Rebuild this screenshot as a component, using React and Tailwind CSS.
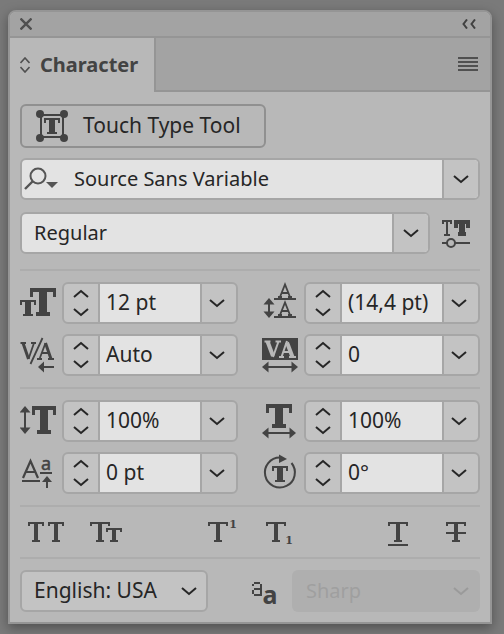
import React from "react";

const INK = "#434343";

function Chevron({ up = false, className = "" }) {
  return (
    <svg width="16" height="9" viewBox="0 0 16 9" aria-hidden="true" className={className}>
      <path
        d={up ? "M1 8 L8 2 L15 8" : "M1 1 L8 7 L15 1"}
        fill="none"
        stroke="currentColor"
        strokeWidth="2"
      />
    </svg>
  );
}

// Slab-serif type symbol: top bar, two hanging serifs, stem and foot.
function Slab({ x, y, w, h, bar, drop, serif, stem, foot }) {
  const mid = x + w / 2;
  return (
    <g fill={INK} shapeRendering="crispEdges">
      <rect x={x} y={y} width={w} height={bar} />
      <rect x={x} y={y} width={serif} height={drop} />
      <rect x={x + w - serif} y={y} width={serif} height={drop} />
      <rect x={mid - stem / 2} y={y} width={stem} height={h} />
      <rect x={mid - foot / 2} y={y + h - bar} width={foot} height={bar} />
    </g>
  );
}

function LargeSlab({ x, y, w = 26, h = 28 }) {
  return <Slab x={x} y={y} w={w} h={h} bar={4} drop={9} serif={3} stem={8} foot={14} />;
}

function SmallSlab({ x, y }) {
  return <Slab x={x} y={y} w={16} h={16} bar={2} drop={5} serif={2} stem={6} foot={10} />;
}

function LightSlab({ x, y = 15, w = 20, h = 20 }) {
  return <Slab x={x} y={y} w={w} h={h} bar={2} drop={4} serif={2} stem={4} foot={8} />;
}

function Icon({ w = 36, h = 42, children }) {
  return (
    <svg width={w} height={h} viewBox={`0 0 ${w} ${h}`} fill={INK} aria-hidden="true" className="shrink-0">
      {children}
    </svg>
  );
}

function ArrowV({ x, top, bottom }) {
  return (
    <>
      <path d={`M${x - 5.5} ${top + 6.5} L${x} ${top} L${x + 5.5} ${top + 6.5} Z`} />
      <path d={`M${x - 5.5} ${bottom - 6.5} L${x} ${bottom} L${x + 5.5} ${bottom - 6.5} Z`} />
      <rect x={x - 1} y={top + 3} width="2" height={bottom - top - 6} />
    </>
  );
}

function ArrowH({ y, left, right }) {
  return (
    <>
      <path d={`M${left + 6.5} ${y - 5.5} L${left} ${y} L${left + 6.5} ${y + 5.5} Z`} />
      <path d={`M${right - 6.5} ${y - 5.5} L${right} ${y} L${right - 6.5} ${y + 5.5} Z`} />
      <rect x={left + 3} y={y - 1} width={right - left - 6} height="2" />
    </>
  );
}

const icons = {
  size: (
    <Icon>
      <LargeSlab x={10} y={6} />
      <SmallSlab x={0} y={18} />
    </Icon>
  ),
  leading: (
    <Icon>
      <g fill="none" stroke={INK} strokeWidth="1.8">
        <path d="M18 15 L23 2.5 L28 15 M20 11 H26 M16 15 H20 M26 15 H30" />
        <path d="M18 33 L23 20.5 L28 33 M20 29 H26 M16 33 H20 M26 33 H30" />
      </g>
      <rect x="12" y="16" width="22" height="2" />
      <rect x="12" y="34" width="22" height="2" />
      <ArrowV x={7} top={16} bottom={36} />
    </Icon>
  ),
  kerning: (
    <Icon>
      <g fill="none" stroke={INK}>
        <path d="M3 9 L8.5 25" strokeWidth="3" />
        <path d="M8.5 25 L14 9 M0.5 9 H6 M11 9 H16 M22.5 4 L10.5 30" strokeWidth="1.8" />
        <path d="M25.5 9 L31 25" strokeWidth="3" />
        <path d="M19.5 25 L25.5 9 M21.5 19 H29 M17 25 H22 M28 25 H34" strokeWidth="1.8" />
      </g>
      <path d="M18 33 L24 27.5 V38.5 Z" />
      <rect x="23" y="32" width="11" height="2" />
    </Icon>
  ),
  tracking: (
    <Icon>
      <rect x="0" y="4" width="36" height="22" />
      <g fill="none" stroke="#b8b8b8">
        <path d="M5.5 7.5 L11 22" strokeWidth="4" />
        <path d="M11 23 L16.5 7.5 M2.5 7.5 H8.5 M13.5 7.5 H19" strokeWidth="2" />
        <path d="M25 8.5 L30.5 23" strokeWidth="4" />
        <path d="M19.5 23 L25 7 M21 18 H28 M17 23 H22 M27 23 H34" strokeWidth="2" />
      </g>
      <ArrowH y={33} left={0} right={36} />
    </Icon>
  ),
  vertical: (
    <Icon>
      <ArrowV x={5} top={6} bottom={34} />
      <LargeSlab x={12} y={6} w={24} />
    </Icon>
  ),
  horizontal: (
    <Icon>
      <LargeSlab x={4} y={4} h={24} />
      <ArrowH y={33} left={0} right={34} />
    </Icon>
  ),
  baseline: (
    <Icon>
      <path d="M3 26 L10.5 9 L18 26 M6 20 H15" fill="none" stroke={INK} strokeWidth="2.2" />
      <rect x="2" y="28" width="18" height="2" />
      <text x="26" y="18" fontSize="18" textAnchor="middle" stroke={INK} strokeWidth="0.5" className="font-['Noto_Sans',sans-serif]">a</text>
      <rect x="20" y="20" width="12" height="2" />
      <path d="M22 30 L27 24 L32 30 Z" />
      <rect x="26" y="28" width="2" height="8" />
    </Icon>
  ),
  rotation: (
    <Icon>
      <path d="M29.5 11 A15 15 0 1 1 18 5.5" fill="none" stroke={INK} strokeWidth="2" />
      <path d="M17 2.5 L25 7 L17 11 Z" />
      <SmallSlab x={10} y={14} />
    </Icon>
  ),
};

function NumberField({ icon, label, value, id }) {
  return (
    <div className="flex min-w-0 items-center">
      <label htmlFor={id} aria-label={label} title={label} className="w-[42px] shrink-0">
        {icons[icon]}
      </label>
      <div className="flex h-[42px] min-w-0 flex-1 rounded-md border-2 border-[#a6a6a6] bg-[#c3c3c3] text-[#262626]">
        <div className="flex w-[34px] shrink-0 flex-col">
          <button type="button" aria-label={`Increase ${label}`} className="flex flex-1 items-center justify-center">
            <Chevron up />
          </button>
          <button type="button" aria-label={`Decrease ${label}`} className="flex flex-1 items-center justify-center">
            <Chevron />
          </button>
        </div>
        <input
          id={id}
          type="text"
          defaultValue={value}
          className="w-0 min-w-0 flex-1 border-x-2 border-[#a6a6a6] bg-[#e3e3e3] pl-1.5 outline-none"
        />
        <button type="button" aria-label={`${label} presets`} className="flex w-[34px] shrink-0 items-center justify-center pr-1">
          <Chevron />
        </button>
      </div>
    </div>
  );
}

function Dropdown({ label, value, search = false }) {
  return (
    <div className="relative min-w-0 flex-1 text-xl text-[#262626]">
      <select
        aria-label={label}
        className={`h-[42px] w-full appearance-none rounded-md border-2 border-[#a6a6a6] bg-[#e3e3e3] pr-10 outline-none ${search ? "pl-[52px]" : "pl-3"}`}
      >
        <option>{value}</option>
      </select>
      {search && (
        <svg width="36" height="26" viewBox="0 0 36 26" fill="none" stroke="#555" aria-hidden="true" className="pointer-events-none absolute top-2 left-1">
          <circle cx="14" cy="10" r="7.5" strokeWidth="2" />
          <path d="M8.5 15.5 L1 23" strokeWidth="2.4" />
          <path d="M22 16 H34 L28 22 Z" fill="#555" stroke="none" />
        </svg>
      )}
      <span className="pointer-events-none absolute inset-y-0.5 right-0.5 flex w-9 items-center justify-center rounded-r border-l-2 border-[#a6a6a6] bg-[#c3c3c3]">
        <Chevron />
      </span>
    </div>
  );
}

function StyleButton({ label, children }) {
  return (
    <button type="button" aria-label={label} title={label}>
      <Icon w={40} h={50}>{children}</Icon>
    </button>
  );
}

function SmallOne({ x, y }) {
  return (
    <text x={x} y={y} textAnchor="middle" fontSize="11" fontWeight="700" className="font-['DejaVu_Serif',serif]">
      1
    </text>
  );
}

const divider = "h-0.5 border-0 bg-[#adadad]";

export default function App() {
  return (
    <main className="min-h-screen bg-[#7a7a7a] pt-2.5 pr-3 pb-2.5 pl-2 font-['Noto_Sans',sans-serif] text-[21px] text-[#262626]">
      <section aria-label="Character" className="min-w-[460px] overflow-hidden rounded-t-lg border-2 border-[#959595] bg-[#b8b8b8] shadow-[0_4px_12px_rgba(0,0,0,0.35)]">
        <header className="flex h-[26px] items-center justify-between border-b-2 border-[#959595] bg-[#a3a3a3] pr-3.5 pl-2.5">
          <button type="button" aria-label="Close">
            <svg width="12" height="12" viewBox="0 0 12 12" stroke="#505050" strokeWidth="2.4" aria-hidden="true">
              <path d="M0.5 0.5 L11.5 11.5 M11.5 0.5 L0.5 11.5" />
            </svg>
          </button>
          <button type="button" aria-label="Collapse panel">
            <svg width="14" height="10" viewBox="0 0 14 10" fill="none" stroke="#404040" strokeWidth="2" aria-hidden="true">
              <path d="M5 0.5 L1.5 5 L5 9.5 M13 0.5 L9.5 5 L13 9.5" />
            </svg>
          </button>
        </header>
        <div className="flex h-[54px]">
          <h1 className="flex w-[146px] shrink-0 items-center gap-2.5 border-r-2 border-[#959595] pl-2.5 text-xl font-bold text-[#434343]">
            <svg width="10" height="16" viewBox="0 0 10 16" fill="none" stroke="#505050" strokeWidth="1.6" aria-hidden="true">
              <path d="M0.5 6 L5 1 L9.5 6 M0.5 10 L5 15 L9.5 10" />
            </svg>
            Character
          </h1>
          <div className="flex flex-1 items-center justify-end border-b-2 border-[#959595] bg-[#a3a3a3] pr-3">
            <button type="button" aria-label="Panel menu">
              <svg width="20" height="14" viewBox="0 0 20 14" fill="#505050" aria-hidden="true">
                <path d="M0 0h20v2H0z M0 4h20v2H0z M0 8h20v2H0z M0 12h20v2H0z" />
              </svg>
            </button>
          </div>
        </div>

        <div className="px-2.5 pt-3 pb-2.5">
          <button type="button" className="flex h-11 w-[246px] items-center gap-[15px] rounded-md border-2 border-[#909090] pl-3.5">
            <Icon w={32} h={32}>
              <rect x="5" y="5" width="22" height="22" fill="none" stroke={INK} strokeWidth="2" />
              <circle cx="4" cy="4" r="4" />
              <circle cx="28" cy="4" r="4" />
              <circle cx="4" cy="28" r="4" />
              <circle cx="28" cy="28" r="4" />
              <SmallSlab x={8} y={8} />
            </Icon>
            Touch Type Tool
          </button>

          <div className="mt-2.5 flex">
            <Dropdown label="Font family" value="Source Sans Variable" search />
          </div>
          <div className="mt-3 flex items-center gap-3">
            <Dropdown label="Font style" value="Regular" />
            <button type="button" aria-label="Variable font options" className="w-[38px] shrink-0">
              <Icon w={28} h={30}>
                <Slab x={0} y={2} w={10} h={16} bar={2} drop={4} serif={2} stem={2} foot={6} />
                <Slab x={12} y={2} w={16} h={16} bar={4} drop={8} serif={4} stem={6} foot={8} />
                <path d="M0 24h28v2H0z" />
                <circle cx="9" cy="25" r="4" fill="#b8b8b8" stroke={INK} strokeWidth="2" />
              </Icon>
            </button>
          </div>

          <hr className={`mt-[15px] mb-[11px] ${divider}`} />
          <div className="grid grid-cols-2 gap-x-6 gap-y-2.5">
            <NumberField id="size" icon="size" label="Font size" value="12 pt" />
            <NumberField id="leading" icon="leading" label="Leading" value="(14,4 pt)" />
            <NumberField id="kerning" icon="kerning" label="Kerning" value="Auto" />
            <NumberField id="tracking" icon="tracking" label="Tracking" value="0" />
          </div>
          <hr className={`my-[11px] ${divider}`} />
          <div className="grid grid-cols-2 gap-x-6 gap-y-2.5">
            <NumberField id="vertical" icon="vertical" label="Vertical scale" value="100%" />
            <NumberField id="horizontal" icon="horizontal" label="Horizontal scale" value="100%" />
            <NumberField id="baseline" icon="baseline" label="Baseline shift" value="0 pt" />
            <NumberField id="rotation" icon="rotation" label="Character rotation" value="0°" />
          </div>
          <hr className={`mt-[11px] ${divider}`} />
          <div className="flex h-[50px] justify-between px-[5px]">
            <div className="flex gap-[18px]">
              <StyleButton label="All caps">
                <LightSlab x={3} w={16} />
                <LightSlab x={23} w={16} />
              </StyleButton>
              <StyleButton label="Small caps">
                <LightSlab x={7} w={20} />
                <LightSlab x={23} y={21} w={16} h={14} />
              </StyleButton>
            </div>
            <div className="flex gap-[18px]">
              <StyleButton label="Superscript">
                <LightSlab x={7} />
                <SmallOne x={32} y={21} />
              </StyleButton>
              <StyleButton label="Subscript">
                <LightSlab x={7} />
                <SmallOne x={30} y={37} />
              </StyleButton>
            </div>
            <div className="flex gap-[18px]">
              <StyleButton label="Underline">
                <LightSlab x={11} />
                <rect x="11" y="37" width="20" height="2" />
              </StyleButton>
              <StyleButton label="Strikethrough">
                <LightSlab x={11} />
                <rect x="11" y="25" width="20" height="2" />
              </StyleButton>
            </div>
          </div>
          <hr className={`mb-[11px] ${divider}`} />
          <div className="flex items-center justify-between">
            <div className="relative w-[188px]">
              <select aria-label="Language" className="h-[42px] w-full appearance-none rounded-md border-2 border-[#a6a6a6] bg-[#c3c3c3] pr-8 pl-3 outline-none">
                <option>English: USA</option>
              </select>
              <Chevron className="pointer-events-none absolute top-[17px] right-[11px]" />
            </div>
            <div className="flex items-center gap-3.5">
              <label htmlFor="antialias" aria-label="Anti-aliasing">
                <Icon w={26} h={42}>
                  <path d="M2 12h6v2H2z M0 14h2v2H0z M8 14h2v12H8z M2 18h6v2H2z M0 20h2v4H0z M2 24h6v2H2z" />
                  <text x="18" y="34" fontSize="25" fontWeight="700" textAnchor="middle" className="font-['Noto_Sans',sans-serif]">a</text>
                </Icon>
              </label>
              <div className="relative w-[188px] text-xl text-[#9a9a9a]">
                <select id="antialias" disabled className="h-[42px] w-full appearance-none rounded-md bg-[#afafaf] pr-8 pl-3.5 text-[#9f9f9f] opacity-100 outline-none">
                  <option>Sharp</option>
                </select>
                <Chevron className="pointer-events-none absolute top-[17px] right-[11px]" />
              </div>
            </div>
          </div>
        </div>
      </section>
    </main>
  );
}
